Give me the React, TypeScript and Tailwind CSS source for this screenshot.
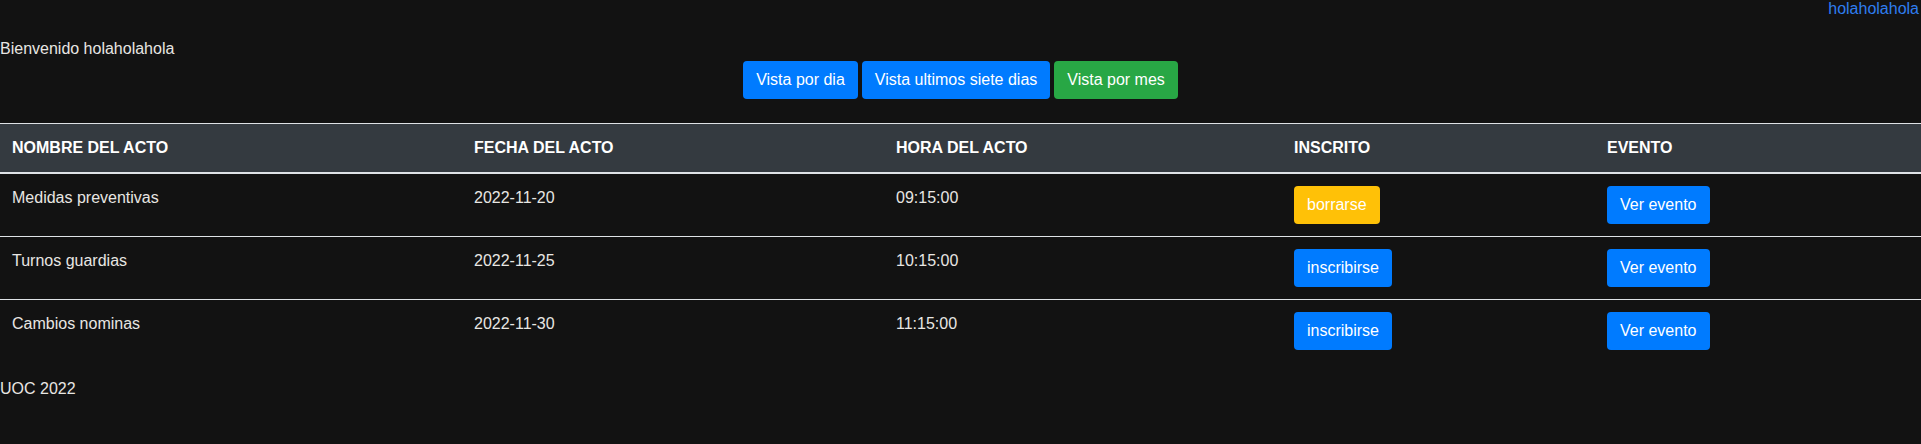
const actos = [
  { nombre: 'Medidas preventivas', fecha: '2022-11-20', hora: '09:15:00', inscrito: true },
  { nombre: 'Turnos guardias', fecha: '2022-11-25', hora: '10:15:00', inscrito: false },
  { nombre: 'Cambios nominas', fecha: '2022-11-30', hora: '11:15:00', inscrito: false },
];

const btn = 'inline-block px-3 py-[6px] leading-6 text-base rounded border border-transparent text-white whitespace-nowrap cursor-pointer';

export default function App() {
  return (
    <div className="min-h-screen bg-[#121212] text-[#e8e6e3] text-base font-['Liberation_Sans',Arial,sans-serif]">
      {/* Top bar */}
      <div className="text-right leading-[normal] pr-[2px]">
        <a href="#" className="text-[#2f7ef0]">holaholahola</a>
      </div>

      <div className="mt-[19px] leading-6">Bienvenido holaholahola</div>

      {/* View switch */}
      <div className="flex justify-center gap-[4px]">
        <button className={`${btn} bg-[#007bff]`}>Vista por dia</button>
        <button className={`${btn} bg-[#007bff]`}>Vista ultimos siete dias</button>
        <button className={`${btn} bg-[#28a745]`}>Vista por mes</button>
      </div>

      {/* Table */}
      <table className="w-full mt-[24px] table-fixed border-collapse">
        <colgroup>
          <col className="w-[462px]" />
          <col className="w-[422px]" />
          <col className="w-[398px]" />
          <col className="w-[313px]" />
          <col />
        </colgroup>
        <thead>
          <tr className="bg-[#343a40] text-white">
            <th className="text-left font-bold p-3 leading-6 border-t border-b-2 border-[#dee2e6]">NOMBRE DEL ACTO</th>
            <th className="text-left font-bold p-3 leading-6 border-t border-b-2 border-[#dee2e6]">FECHA DEL ACTO</th>
            <th className="text-left font-bold p-3 leading-6 border-t border-b-2 border-[#dee2e6]">HORA DEL ACTO</th>
            <th className="text-left font-bold p-3 leading-6 border-t border-b-2 border-[#dee2e6]">INSCRITO</th>
            <th className="text-left font-bold p-3 leading-6 border-t border-b-2 border-[#dee2e6]">EVENTO</th>
          </tr>
        </thead>
        <tbody>
          {actos.map((a, i) => (
            <tr key={a.nombre} className={i === 0 ? '' : 'border-t border-[#dee2e6]'}>
              <td className="p-3 leading-6 align-top">{a.nombre}</td>
              <td className="p-3 leading-6 align-top">{a.fecha}</td>
              <td className="p-3 leading-6 align-top">{a.hora}</td>
              <td className="p-3 leading-6 align-top">
                {a.inscrito ? (
                  <button className={`${btn} bg-[#ffc107]`}>borrarse</button>
                ) : (
                  <button className={`${btn} bg-[#007bff]`}>inscribirse</button>
                )}
              </td>
              <td className="p-3 leading-6 align-top">
                <button className={`${btn} bg-[#007bff]`}>Ver evento</button>
              </td>
            </tr>
          ))}
        </tbody>
      </table>

      <footer className="mt-[15px] leading-6">UOC 2022</footer>
    </div>
  );
}
